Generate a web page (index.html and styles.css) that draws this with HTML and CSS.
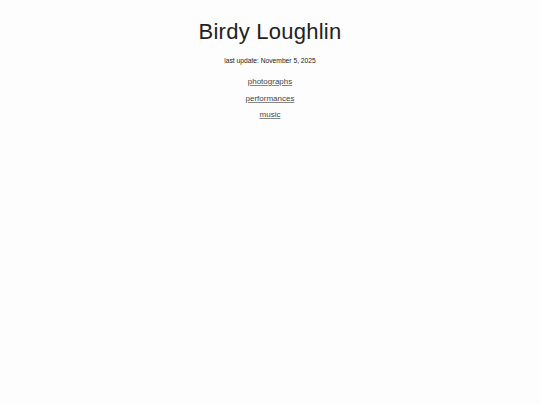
FILE: index.html
```html
<!DOCTYPE html>
<html>
<head>
<meta charset="utf-8">
<link rel="stylesheet" href="styles.css">
</head>
<body>
<div class="page">
  <h1 class="title">Birdy Loughlin</h1>
  <p class="update">last update: November 5, 2025</p>
  <nav class="links">
    <a href="#">photographs</a>
    <a href="#">performances</a>
    <a href="#">music</a>
  </nav>
</div>
</body>
</html>
```

FILE: styles.css
```css
html, body {
  margin: 0;
  padding: 0;
  background: #fdfdfd;
}
body {
  font-family: "Liberation Sans", Arial, sans-serif;
  color: #222;
}
.page {
  display: flex;
  flex-direction: column;
  align-items: center;
  padding-top: 18px;
}
.title {
  margin: 0;
  font-size: 22px;
  font-weight: normal;
  letter-spacing: 0.25px;
  line-height: 28px;
}
.update {
  margin: 10px 0 0;
  font-size: 6.7px;
  line-height: 10px;
  color: #222;
}
.links {
  margin-top: 10px;
  display: flex;
  flex-direction: column;
  align-items: center;
  gap: 4.5px;
}
.links a {
  color: #444;
  font-size: 8px;
  line-height: 12px;
  text-decoration: underline;
  text-decoration-color: #888;
}
```
